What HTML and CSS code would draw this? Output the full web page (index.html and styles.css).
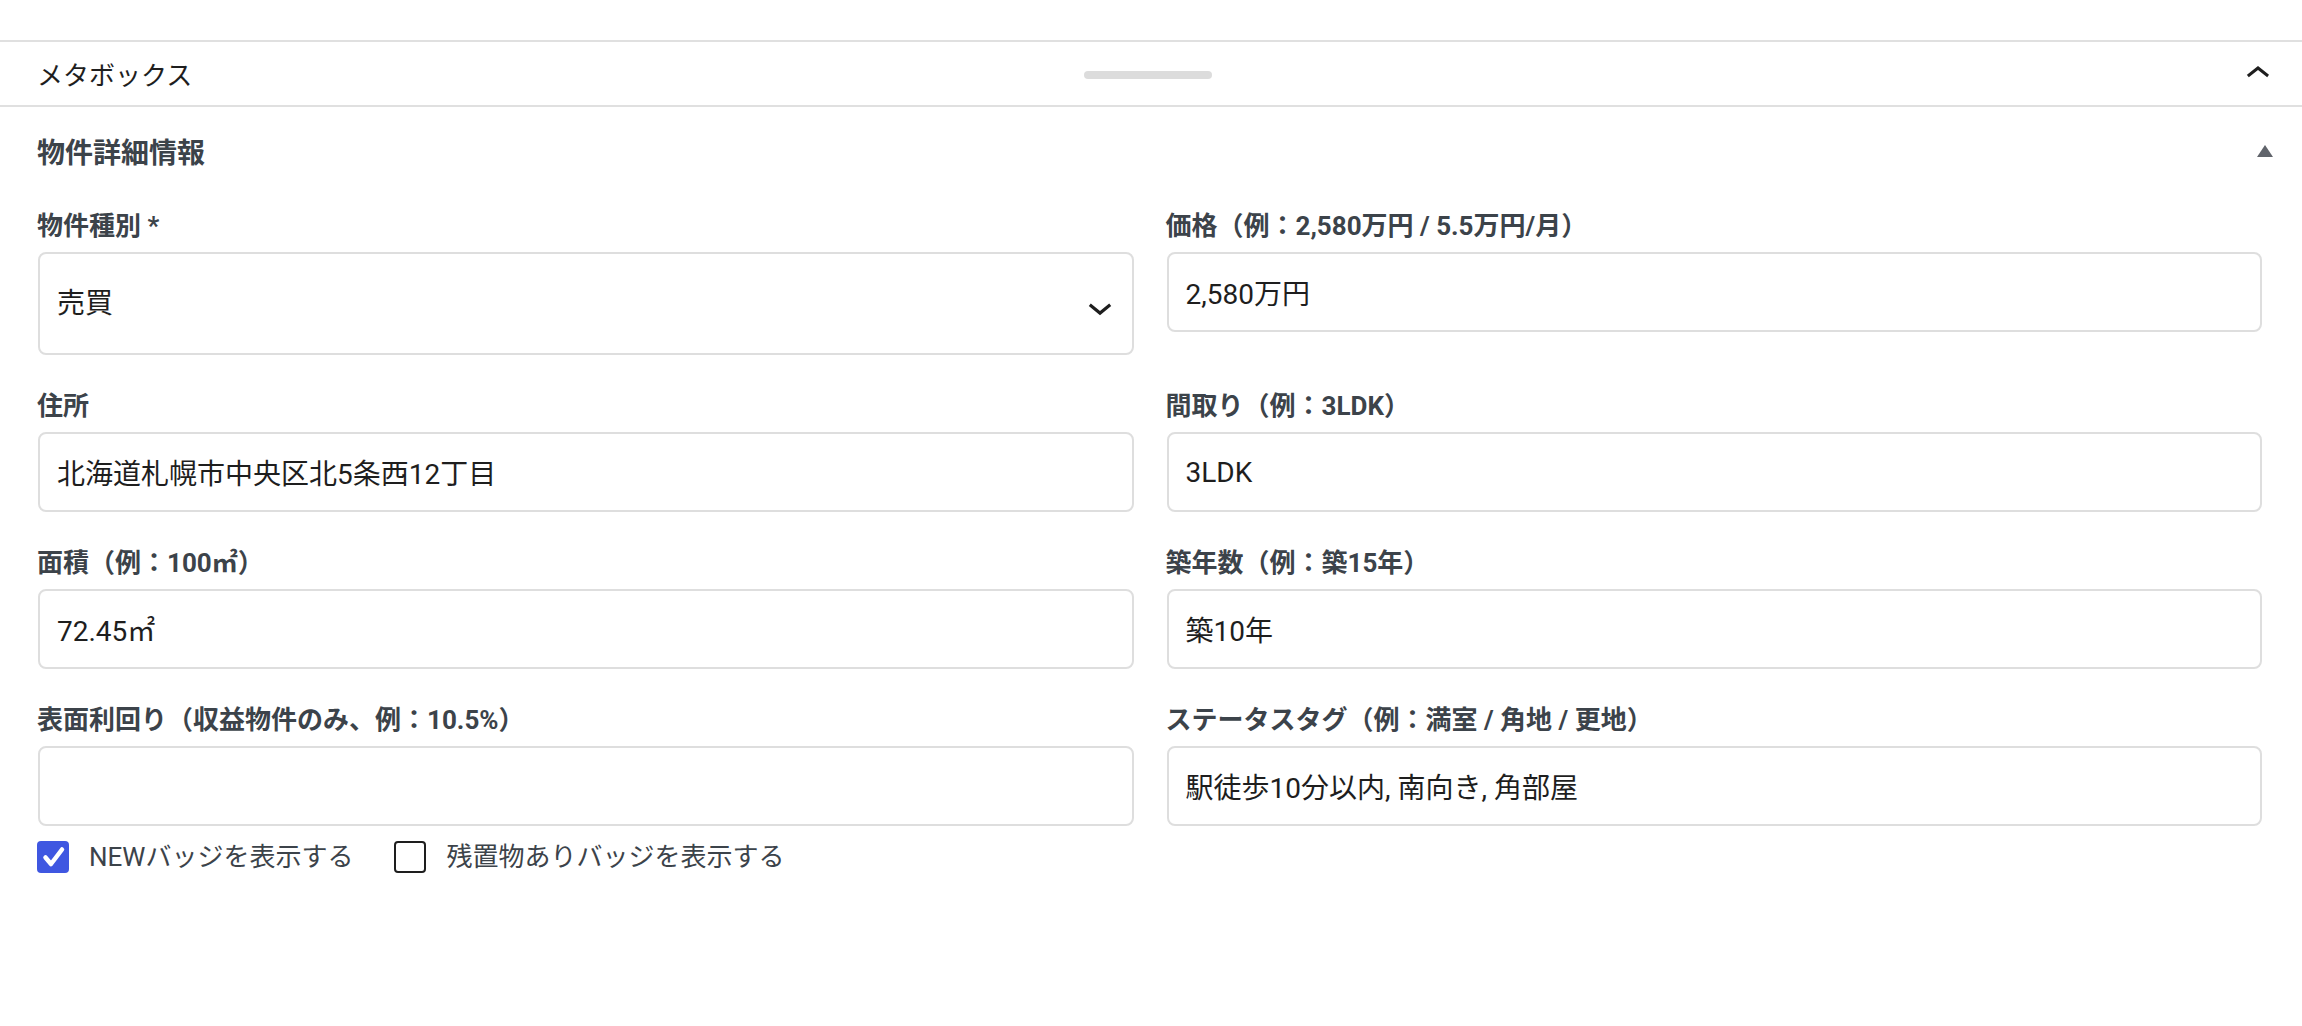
FILE: index.html
```html
<!DOCTYPE html>
<html lang="ja">
  <head>
    <meta charset="utf-8">
    <title>物件詳細情報</title>
    <link rel="stylesheet" href="styles.css">
  </head>
  <body>
    <div class="meta-area">
      <div class="meta-header">
        <span class="meta-title">メタボックス</span>
        <span class="resize-handle"></span>
        <button class="panel-toggle" type="button" aria-label="閉じる">
          <svg viewBox="0 0 24 24" width="48" height="48"><path d="M6.5 12.4L12 8l5.5 4.4-.9 1.2L12 10l-4.6 3.6-1-1.2z"/></svg>
        </button>
      </div>

      <div class="postbox">
        <div class="postbox-header">
          <h2>物件詳細情報</h2>
          <span class="toggle-indicator"></span>
        </div>

        <div class="fields">
          <div class="field">
            <label for="type">物件種別 *</label>
            <div class="select-wrap">
              <select id="type">
                <option>売買</option>
                <option>賃貸</option>
              </select>
              <svg class="select-arrow" viewBox="0 0 24 24" width="48" height="48"><path d="M17.6 11.5L12 16.1l-5.6-4.6 1-1.2L12 14l4.6-3.7 1 1.2z"/></svg>
            </div>
          </div>
          <div class="field">
            <label for="price">価格（例：2,580万円 / 5.5万円/月）</label>
            <input id="price" type="text" value="2,580万円">
          </div>

          <div class="field">
            <label for="address">住所</label>
            <input id="address" type="text" value="北海道札幌市中央区北5条西12丁目">
          </div>
          <div class="field">
            <label for="layout">間取り（例：3LDK）</label>
            <input id="layout" type="text" value="3LDK">
          </div>

          <div class="field">
            <label for="area">面積（例：100㎡）</label>
            <input id="area" type="text" value="72.45㎡">
          </div>
          <div class="field">
            <label for="age">築年数（例：築15年）</label>
            <input id="age" type="text" value="築10年">
          </div>

          <div class="field">
            <label for="yield">表面利回り（収益物件のみ、例：10.5%）</label>
            <input id="yield" type="text" value="">
            <div class="badges">
              <label class="check">
                <span class="box checked">
                  <svg viewBox="0 0 32 32" width="32" height="32"><polyline points="8.5,16.5 14,23 25,8.5"/></svg>
                </span>
                NEWバッジを表示する
              </label>
              <label class="check">
                <span class="box"></span>
                残置物ありバッジを表示する
              </label>
            </div>
          </div>
          <div class="field">
            <label for="tags">ステータスタグ（例：満室 / 角地 / 更地）</label>
            <input id="tags" type="text" value="駅徒歩10分以内, 南向き, 角部屋">
          </div>
        </div>
      </div>
    </div>
  </body>
</html>
```

FILE: styles.css
```css
body {
  margin: 0;
  background-color: #fff;
  font-family: Roboto, "Noto Sans CJK JP", sans-serif;
  color: #1e1e1e;
}

.meta-area {
  padding-top: 40px;
}

.meta-header {
  display: grid;
  grid-template-columns: 1fr auto 1fr;
  align-items: center;
  height: 63px;
  padding: 0 20px 0 37px;
  border-top: 2px solid #e0e0e0;
  border-bottom: 2px solid #e0e0e0;
}
.meta-title {
  font-size: 26px;
  color: #1e1e1e;
}
.resize-handle {
  width: 128px;
  height: 8px;
  margin: 2px 23px 0 0;
  border-radius: 4px;
  background-color: #dcdcdc;
}
.panel-toggle {
  justify-self: end;
  display: flex;
  padding: 0;
  border: 0;
  background: none;
}
.panel-toggle svg {
  fill: #1e1e1e;
}

.postbox-header {
  display: flex;
  justify-content: space-between;
  align-items: center;
  height: 88px;
  padding: 0 29px 0 37px;
}
.postbox-header h2 {
  margin: 0;
  font-size: 28px;
  font-weight: 700;
  color: #3c434a;
}
.toggle-indicator {
  width: 0;
  height: 0;
  border-left: 8px solid transparent;
  border-right: 8px solid transparent;
  border-bottom: 12px solid #60646b;
}

.fields {
  display: grid;
  grid-template-columns: 1fr 1fr;
  column-gap: 33px;
  row-gap: 33px;
  align-items: start;
  padding: 13px 41px 40px 37px;
}
.field > label {
  display: block;
  margin-bottom: 8px;
  font-size: 26px;
  line-height: 36px;
  font-weight: 700;
  color: #3c434a;
}

.field input[type="text"],
.field select {
  display: block;
  box-sizing: border-box;
  width: 100%;
  height: 80px;
  margin: 0 0 0 1px;
  padding: 0 17px;
  border: 2px solid #dedede;
  border-radius: 8px;
  background-color: #fff;
  font-family: inherit;
  font-size: 28px;
  color: #1e1e1e;
  outline: none;
}

.select-wrap {
  position: relative;
}
.field select {
  height: 103px;
  -webkit-appearance: none;
  appearance: none;
}
.select-arrow {
  position: absolute;
  top: 31px;
  right: 9px;
  fill: #1e1e1e;
  pointer-events: none;
}

.badges {
  display: flex;
  gap: 41px;
  margin-top: 15px;
}
.check {
  display: flex;
  align-items: center;
  gap: 20px;
  font-size: 26px;
  line-height: 32px;
  color: #3c434a;
}
.box {
  display: flex;
  box-sizing: border-box;
  width: 32px;
  height: 32px;
  border: 2px solid #1e1e1e;
  border-radius: 4px;
  background-color: #fff;
}
.box.checked {
  border: 0;
  background-color: #3f57e1;
}
.box svg polyline {
  fill: none;
  stroke: #fff;
  stroke-width: 4.5;
  stroke-linecap: round;
  stroke-linejoin: round;
}
```
